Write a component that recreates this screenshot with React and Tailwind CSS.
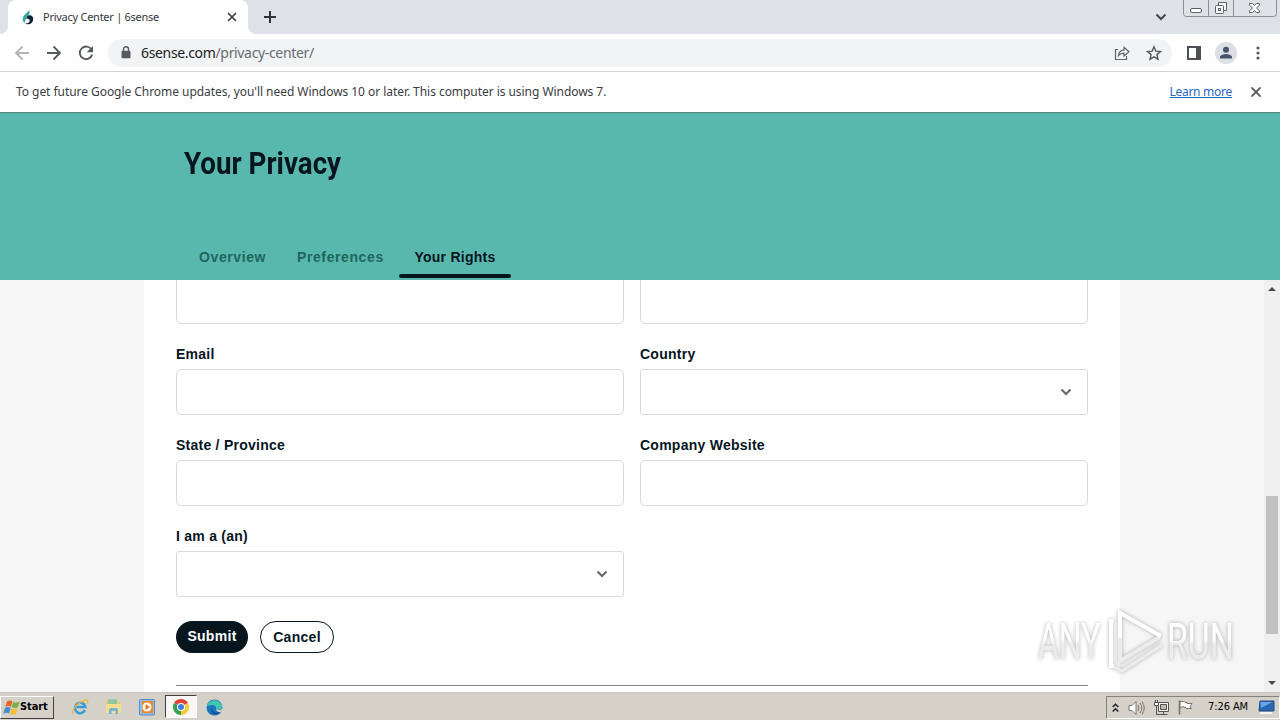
import React from "react";

const tabs = [
  { label: "Overview", width: "w-[68px]" },
  { label: "Preferences", width: "w-[87px]" },
  { label: "Your Rights", active: true },
];

const Chevron = () => (
  <svg width="12" height="8" viewBox="0 0 12 8" fill="none" stroke="#666" strokeWidth="2">
    <path d="M1.5 1.5 6 6l4.5-4.5" />
  </svg>
);

const Field = ({ label, select }) => (
  <div>
    <label className="block mt-5 mb-[5px] h-5 leading-5 text-sm font-bold tracking-[0.25px] text-[#07151f] whitespace-nowrap">
      {label}
    </label>
    <div className={`h-[46px] border border-[#d8d9da] flex items-center justify-end pr-[15px] ${select ? "rounded-[3px]" : "rounded-[5px]"}`}>
      {select && <Chevron />}
    </div>
  </div>
);

const TabStrip = () => (
  <div className="h-[34px] bg-[#dee1e6] flex">
    <div className="w-2 bg-white">
      <div className="h-full bg-[#dee1e6] rounded-br-lg" />
    </div>
    <div className="w-60 bg-white rounded-t-lg flex items-center pl-3 pr-[11px]">
      <svg width="16" height="16" viewBox="0 0 16 16">
        <path d="M9.5 1 4.2 6.2C2 9 2.300 12.300 4.800 14 4.900 11.200 6 9.300 8 7.700L9.400 5z" fill="#35a99c" />
        <path d="M8.500 6.500c3-.8 4.900 1 4.700 4-.2 3-2.500 4.800-5.100 4.800-1.200 0-2.200-.4-2.800-1.100 2.400.3 4-.7 4.300-2.300.3-1.500-.9-2.400-3-2 .1-1.800.9-3 1.900-3.400z" fill="#10243b" />
      </svg>
      <span className="ml-[7px] text-[11px] tracking-[-0.26px] text-[#33363a] whitespace-nowrap">Privacy Center | 6sense</span>
      <svg className="ml-auto" width="10" height="10" viewBox="0 0 10 10" stroke="#3c4043" strokeWidth="1.7">
        <path d="m1 1 8 8M9 1 1 9" />
      </svg>
    </div>
    <div className="w-2 bg-white">
      <div className="h-full bg-[#dee1e6] rounded-bl-lg" />
    </div>
    <svg className="ml-2 mt-[11px]" width="12" height="12" viewBox="0 0 12 12" stroke="#303236" strokeWidth="2">
      <path d="M6 0v12M0 6h12" />
    </svg>
    <svg className="ml-auto mt-[13px] mr-4" width="12" height="8" viewBox="0 0 12 8" fill="none" stroke="#45484c" strokeWidth="2">
      <path d="M1.5 1.5 6 6l4.5-4.5" />
    </svg>
    <svg className="mr-[3px]" width="94" height="17" viewBox="0 0 94 17" fill="none" stroke="#8b8e94">
      <path d="M.5 0v13.5q0 3 3 3h87q3 0 3-3V0M25.500 0v16M50.500 0v16" />
      <g stroke="#5c5f65">
        <rect x="7.500" y="8.500" width="11" height="4" rx="1.500" fill="#fff" />
        <path d="M35.500 5.500v-3h8v8h-3" fill="#f4f5f7" />
        <rect x="32.500" y="5.500" width="8" height="8" rx="1" fill="#fff" />
        <rect x="35.500" y="8.500" width="2" height="2" />
        <path d="M66.500 3.500h3l2 2 2-2h3v1.500L73.500 8l3 3v1.500h-3l-2-2-2 2h-3V11l3-3-3-3z" fill="#fff" />
      </g>
    </svg>
  </div>
);

const Toolbar = () => (
  <div className="h-[38px] bg-white border-b border-[#d3d5d7] flex items-center pl-[14px] pr-[15px]">
    <svg width="16" height="16" viewBox="0 0 16 16" fill="none" stroke="#b1b3b5" strokeWidth="1.800">
      <path d="M15 8H2M8.500 1.500 2 8l6.500 6.500" />
    </svg>
    <svg className="ml-4" width="16" height="16" viewBox="0 0 16 16" fill="none" stroke="#56595d" strokeWidth="1.800">
      <path d="M1 8h13M7.500 1.500 14 8l-6.500 6.500" />
    </svg>
    <svg className="ml-4" width="16" height="16" viewBox="0 0 16 16" fill="none" stroke="#56595d" strokeWidth="1.900">
      <path d="M13.600 4.700A6.300 6.300 0 1 0 14.200 9.500" />
      <path d="M15 1v6.300H8.700z" fill="#56595d" stroke="none" />
    </svg>
    <div className="ml-[14px] h-7 w-[1064px] rounded-full bg-[#f1f3f4] flex items-center pl-[13px] pr-[10px]">
      <svg width="10" height="13" viewBox="0 0 10 13">
        <path d="M2.500 6V3.300a2.500 2.500 0 0 1 5 0V6" fill="none" stroke="#56595d" strokeWidth="1.400" />
        <rect x="0.500" y="4.800" width="9" height="7.400" rx="1" fill="#56595d" />
      </svg>
      <span className="ml-[10px] text-[14px] tracking-[-0.34px] text-[#686c70] whitespace-nowrap">
        <span className="text-[#202124]">6sense.com</span>/privacy-center/
      </span>
      <svg className="ml-auto" width="16" height="16" viewBox="0 0 16 16" fill="none" stroke="#606367" strokeWidth="1.200">
        <path d="M4 4.500H1.500v10h11V11" />
        <path d="M4.500 10.500c.4-3.700 2.500-5.300 5.500-5.400V2.300l5 4.400-5 4.300V8.100c-2.300 0-4 .6-5.500 2.400z" />
      </svg>
      <svg className="ml-4" width="16" height="16" viewBox="0 0 16 16" fill="none" stroke="#56595d" strokeWidth="1.400">
        <path d="m8 1.800 1.800 4.300 4.700.4-3.600 3.100 1.100 4.600L8 11.800l-4 2.400 1.100-4.600-3.600-3.100 4.700-.4z" />
      </svg>
    </div>
    <svg className="ml-[15px]" width="14" height="14" viewBox="0 0 14 14">
      <path d="M1 1h12v12H1z" fill="none" stroke="#4c4f53" strokeWidth="2" />
      <path d="M9 1h4v12H9z" fill="#4c4f53" />
    </svg>
    <svg className="ml-[14px]" width="22" height="22" viewBox="0 0 22 22">
      <circle cx="11" cy="11" r="11" fill="#dcdfe4" />
      <circle cx="11" cy="7.800" r="3" fill="#48546c" />
      <path d="M5 16.500V15c0-2 4-3 6-3s6 1 6 3v1.500z" fill="#48546c" />
    </svg>
    <svg className="ml-auto mr-[5px]" width="4" height="14" viewBox="0 0 4 14" fill="#56595d">
      <circle cx="2" cy="2" r="1.600" />
      <circle cx="2" cy="7" r="1.600" />
      <circle cx="2" cy="12" r="1.600" />
    </svg>
  </div>
);

const InfoBar = () => (
  <div className="h-[41px] bg-white border-b border-[#57877f] flex items-center pl-4 pr-[19px] text-[12px]">
    <span className="tracking-[-0.05px] text-[#3a3c3f] whitespace-nowrap">
      To get future Google Chrome updates, you'll need Windows 10 or later. This computer is using Windows 7.
    </span>
    <a className="ml-auto tracking-[-0.27px] text-[#2a66c4] underline whitespace-nowrap">Learn more</a>
    <svg className="ml-[19px]" width="10" height="10" viewBox="0 0 10 10" stroke="#56595d" strokeWidth="1.900">
      <path d="m.5.5 9 9M9.500.5l-9 9" />
    </svg>
  </div>
);

const Hero = () => (
  <div className="h-[167px] bg-[#59b8ad] border-t border-[#54aba1] pl-[184px] flex flex-col text-[#07151f]">
    <h1 className="mt-[29px] h-10 leading-10 font-['Roboto'] text-[32px] font-bold whitespace-nowrap">
      <span className="inline-block origin-left scale-x-[0.867]">Your Privacy</span>
    </h1>
    <div className="mt-auto mb-[2px] flex text-sm font-bold tracking-[0.6px] whitespace-nowrap">
      {tabs.map((t) =>
        t.active ? (
          <div key={t.label} className="w-28 flex flex-col items-center">
            <span className="h-[27px] leading-5 tracking-[0.25px]">{t.label}</span>
            <div className="h-1 w-full rounded-sm bg-[#07151f]" />
          </div>
        ) : (
          <div key={t.label} className="px-[15px] text-[#20665f] leading-5">
            <div className={t.width}>{t.label}</div>
          </div>
        )
      )}
    </div>
  </div>
);

const Watermark = () => (
  <svg
    className="absolute left-[1030px] top-[602px] drop-shadow-[0_0_2px_rgba(0,0,0,0.3)]"
    width="212"
    height="76"
    viewBox="0 0 212 76"
    fill="none"
  >
    <defs>
      <linearGradient id="fade" gradientUnits="userSpaceOnUse" x1="0" y1="20" x2="0" y2="58">
        <stop offset="0.45" stopColor="#fff" />
        <stop offset="0.6" stopColor="#ececec" />
      </linearGradient>
    </defs>
    <g fill="url(#fade)" fontFamily="Roboto" fontSize="50" fontWeight="400">
      <text transform="translate(8 0) scale(0.64 1)" x="0" y="57">ANY</text>
      <text transform="translate(137 0) scale(0.675 1)" x="0" y="57">RUN</text>
    </g>
    <path d="M84 19h-3v45h3" stroke="#fff" strokeWidth="4" />
    <path d="M90 12v47l40-24" stroke="#ececec" strokeWidth="4" />
    <path d="M84 65l8 4 40-26" stroke="#ececec" strokeWidth="3" />
    <path d="M90 36V11l41 23" stroke="#fff" strokeWidth="4" />
  </svg>
);

const Page = () => (
  <div className="h-[412px] bg-[#f6f6f6] flex overflow-hidden">
    <main className="ml-36 w-[976px] bg-white px-8">
      <div className="grid grid-cols-2 gap-x-4">
        <div className="h-11 border border-t-0 border-[#d8d9da] rounded-b-[5px]" />
        <div className="h-11 border border-t-0 border-[#d8d9da] rounded-b-[5px]" />
        <Field label="Email" />
        <Field label="Country" select />
        <Field label="State / Province" />
        <Field label="Company Website" />
        <Field label="I am a (an)" select />
      </div>
      <div className="mt-6 flex gap-3 text-sm font-bold tracking-[0.3px]">
        <button className="w-[72px] h-8 pb-0.5 rounded-full bg-[#07151f] text-white">Submit</button>
        <button className="w-[74px] h-8 rounded-full border border-[#07151f] text-[#07151f]">Cancel</button>
      </div>
      <hr className="mt-8 border-[#858585]" />
    </main>
    <div className="ml-auto w-4 bg-[#f0f0f0] flex flex-col items-center py-[6px]">
      <svg width="8" height="5" viewBox="0 0 8 5"><path d="M0 5 4 1l4 4z" fill="#484848" /></svg>
      <div className="mt-[205px] w-3 h-[138px] bg-[#c1c1c1]" />
      <svg className="mt-auto" width="8" height="5" viewBox="0 0 8 5"><path d="M0 0 4 4l4-4z" fill="#484848" /></svg>
    </div>
  </div>
);

const Taskbar = () => (
  <div className="h-7 bg-[#d5d1c9] border-t border-[#cbc8c1] flex items-center text-[11px] text-black">
    <div className="mt-[2px] w-[54px] h-[23px] border border-t-white border-l-white border-b-[#404040] border-r-[#404040] flex items-center pl-[2px]">
      <svg width="17" height="16" viewBox="0 0 17 16">
        <path d="M4 1.500q3-2 5.500 0L8 7Q5.500 5 2.300 7z" fill="#e8642c" />
        <path d="M10.200 2q3 1.500 6.300-.5L15 7q-3 1.800-6.300.3z" fill="#75b443" />
        <path d="M2 8q3.200-2 5.700 0L6 13.500Q3.500 12 .3 13.700z" fill="#438dd4" />
        <path d="M8.500 8.400q3 1.500 6.200-.3L13 13.700q-3 2-6.200.3z" fill="#f5bd32" />
      </svg>
      <span className="font-bold tracking-[-0.1px]">Start</span>
    </div>
    <svg className="ml-[17px]" width="18" height="18" viewBox="0 0 18 18" fill="none">
      <path d="M14 12A5.200 5.200 0 1 1 14.300 9H5.500" stroke="#3c9bdb" strokeWidth="2.600" />
      <path d="M2.500 16C-.5 13.500 6 4 15 2c2.500-.3 2 2 1 3.500" stroke="#e8b93a" strokeWidth="1.300" />
    </svg>
    <svg className="ml-[16px]" width="17" height="17" viewBox="0 0 17 17">
      <path d="M1 3h5l1 1h8v11H1z" fill="#ebc862" />
      <path d="M3 1.500h9V6H3z" fill="#8fc7a0" />
      <path d="M1 6h15v9H1z" fill="#f5df8c" />
      <path d="M4 16v-4q0-2 2-2h5q2 0 2 2v4h-2.500v-3h-4v3z" fill="#74b2dc" />
    </svg>
    <svg className="ml-[17px] mt-px" width="16" height="17" viewBox="0 0 16 17">
      <rect x="0.500" y="0.500" width="15" height="15.500" rx="1" fill="#8fbce6" stroke="#5790c7" />
      <rect x="3" y="2" width="11" height="12" fill="#ef8b22" />
      <circle cx="8" cy="8" r="4.500" fill="#fff" />
      <path d="m6.500 5 4.500 3-4.500 3z" fill="#e8761b" />
    </svg>
    <div className="ml-[10px] w-8 h-[23px] bg-[#f8f7f5] border border-t-[#404040] border-l-[#404040] border-b-white border-r-white flex items-center justify-center">
      <svg width="16" height="16" viewBox="0 0 16 16">
        <path d="M8 8 1.070 4A8 8 0 0 1 14.930 4z" fill="#df4435" />
        <path d="M8 8 14.930 4A8 8 0 0 1 8 16z" fill="#f8cb37" />
        <path d="M8 8v8A8 8 0 0 1 1.070 4z" fill="#32a252" />
        <circle cx="8" cy="8" r="4" fill="#fff" />
        <circle cx="8" cy="8" r="3" fill="#3c7de0" />
      </svg>
    </div>
    <svg className="ml-[9px] mt-px" width="17" height="17" viewBox="0 0 17 17">
      <circle cx="8.500" cy="8.500" r="8" fill="#1878bf" />
      <path d="M1 7C2 1 12-2 16 6c1 4-3 6-6 4 1-2-1-4-4-4-2 0-4 1-5 1z" fill="#43c5b0" />
      <path d="M6 9c0 4 4 6 8 4-3 5-11 2-8-4z" fill="#124b94" />
      <path d="M10 10c3 2 5 1 6.500-1l-1 4c-2 .5-5 0-5.500-3z" fill="#d5d1c9" />
    </svg>
    <div className="ml-auto mt-[2px] w-[174px] h-[23px] border border-t-[#858279] border-l-[#858279] border-b-white border-r-white flex items-center pl-[5px] whitespace-nowrap">
      <svg width="7" height="10" viewBox="0 0 7 10" fill="none" stroke="#222" strokeWidth="1.500">
        <path d="m.7 4 2.800-2.800L6.300 4M.7 8.500l2.800-2.800 2.800 2.800" />
      </svg>
      <svg className="ml-[9px]" width="17" height="16" viewBox="0 0 17 16" fill="none" stroke="#77756f">
        <path d="M1 5.500h3l4-4v13l-4-4H1z" fill="#fff" />
        <path d="M10 5q1.500 3 0 6M12 3q3.500 5 0 10M14 1.500q4.500 6.500 0 13" />
      </svg>
      <svg className="ml-2" width="17" height="16" viewBox="0 0 17 16" fill="none" stroke="#55534e">
        <path d="M5.500 2.500h10v9h-10z" fill="#f3f2ef" />
        <path d="M7.500 4.500h6v5h-6z" fill="#bcb9b2" />
        <path d="M3.500 5v9.500h11M10.500 11.500v3" />
        <path d="M1.500 2.500h4v3h-4zM2.500 0v2M4.500 0v2" fill="#fff" />
      </svg>
      <svg className="ml-[7px]" width="17" height="17" viewBox="0 0 17 17" stroke="#77746e">
        <path d="M2.500 1.500v14" strokeWidth="1.600" />
        <path d="M3 2.500q3-1 6 1h1v1h5l-2 3 1.500 2H9v-1Q6 7 3 8.500z" fill="#fff" />
      </svg>
      <span className="ml-auto tracking-[-0.1px]">7:26 AM</span>
      <svg className="ml-[10px] mr-1" width="17" height="15" viewBox="0 0 17 15">
        <path d="M2 1h14v10H1z" fill="#2866b4" stroke="#214c88" />
        <path d="M2.500 2h12L3 8z" fill="#68a7e5" />
        <path d="M2 13h12" stroke="#f4f4f4" strokeWidth="2" />
      </svg>
    </div>
  </div>
);

const App = () => (
  <div className="relative w-[1280px] h-[720px] overflow-hidden bg-white font-['Liberation_Sans',sans-serif]">
    <div className="font-['Noto_Sans',sans-serif]">
      <TabStrip />
      <Toolbar />
      <InfoBar />
    </div>
    <Hero />
    <Page />
    <div className="font-['DejaVu_Sans_Condensed','Noto_Sans',sans-serif]">
      <Taskbar />
    </div>
    <Watermark />
  </div>
);

export default App;
